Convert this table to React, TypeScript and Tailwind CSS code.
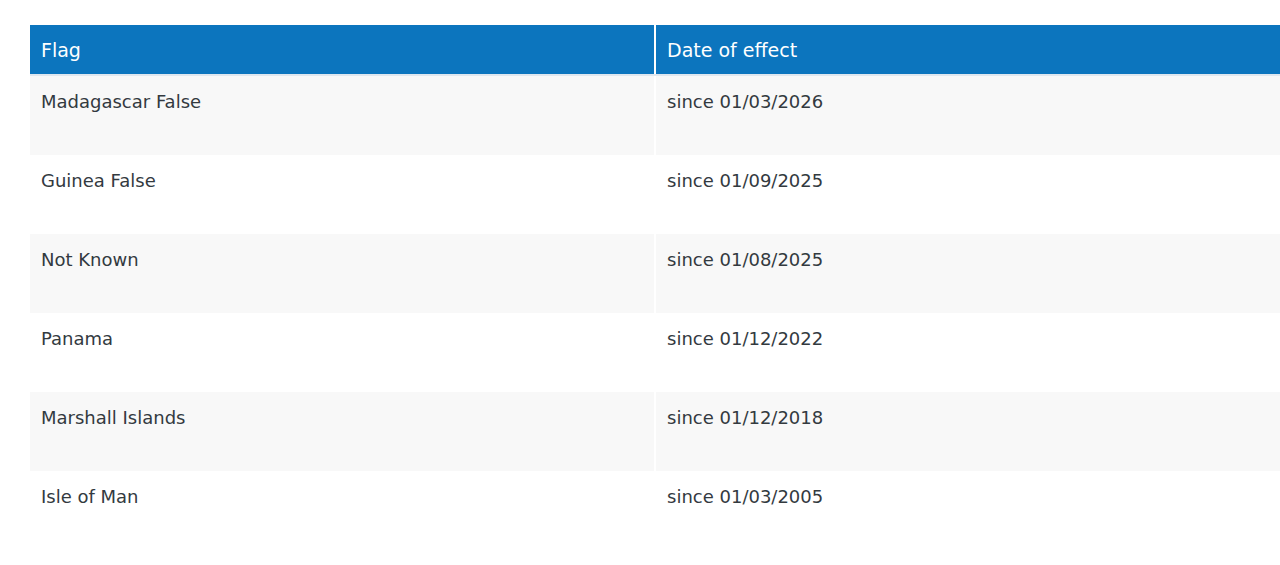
const rows = [
  { flag: "Madagascar False", date: "since 01/03/2026" },
  { flag: "Guinea False", date: "since 01/09/2025" },
  { flag: "Not Known", date: "since 01/08/2025" },
  { flag: "Panama", date: "since 01/12/2022" },
  { flag: "Marshall Islands", date: "since 01/12/2018" },
  { flag: "Isle of Man", date: "since 01/03/2005" },
]

export default function App() {
  return (
    <div className="min-h-[565px] bg-white overflow-hidden pl-[30px] pt-[25px] font-['DejaVu_Sans',Verdana,sans-serif] text-[#333a3f]">
      <div className="w-[1300px]">
        <div className="grid grid-cols-[626px_1fr] bg-[#0c75be] text-white text-[19px] border-b-2 border-[#dfe7ef]">
          <div className="h-[49px] flex items-center pt-px px-[11px] border-r-2 border-white">Flag</div>
          <div className="h-[49px] flex items-center pt-px px-[11px]">Date of effect</div>
        </div>
        {rows.map((r, i) => (
          <div
            key={r.flag}
            className={`grid grid-cols-[626px_1fr] h-[79px] text-[18px] ${i % 2 === 0 ? "bg-[#f8f8f8]" : "bg-white"}`}
          >
            <div className="px-[11px] pt-[12px] border-r-2 border-white">{r.flag}</div>
            <div className="px-[11px] pt-[12px]">{r.date}</div>
          </div>
        ))}
      </div>
    </div>
  )
}
